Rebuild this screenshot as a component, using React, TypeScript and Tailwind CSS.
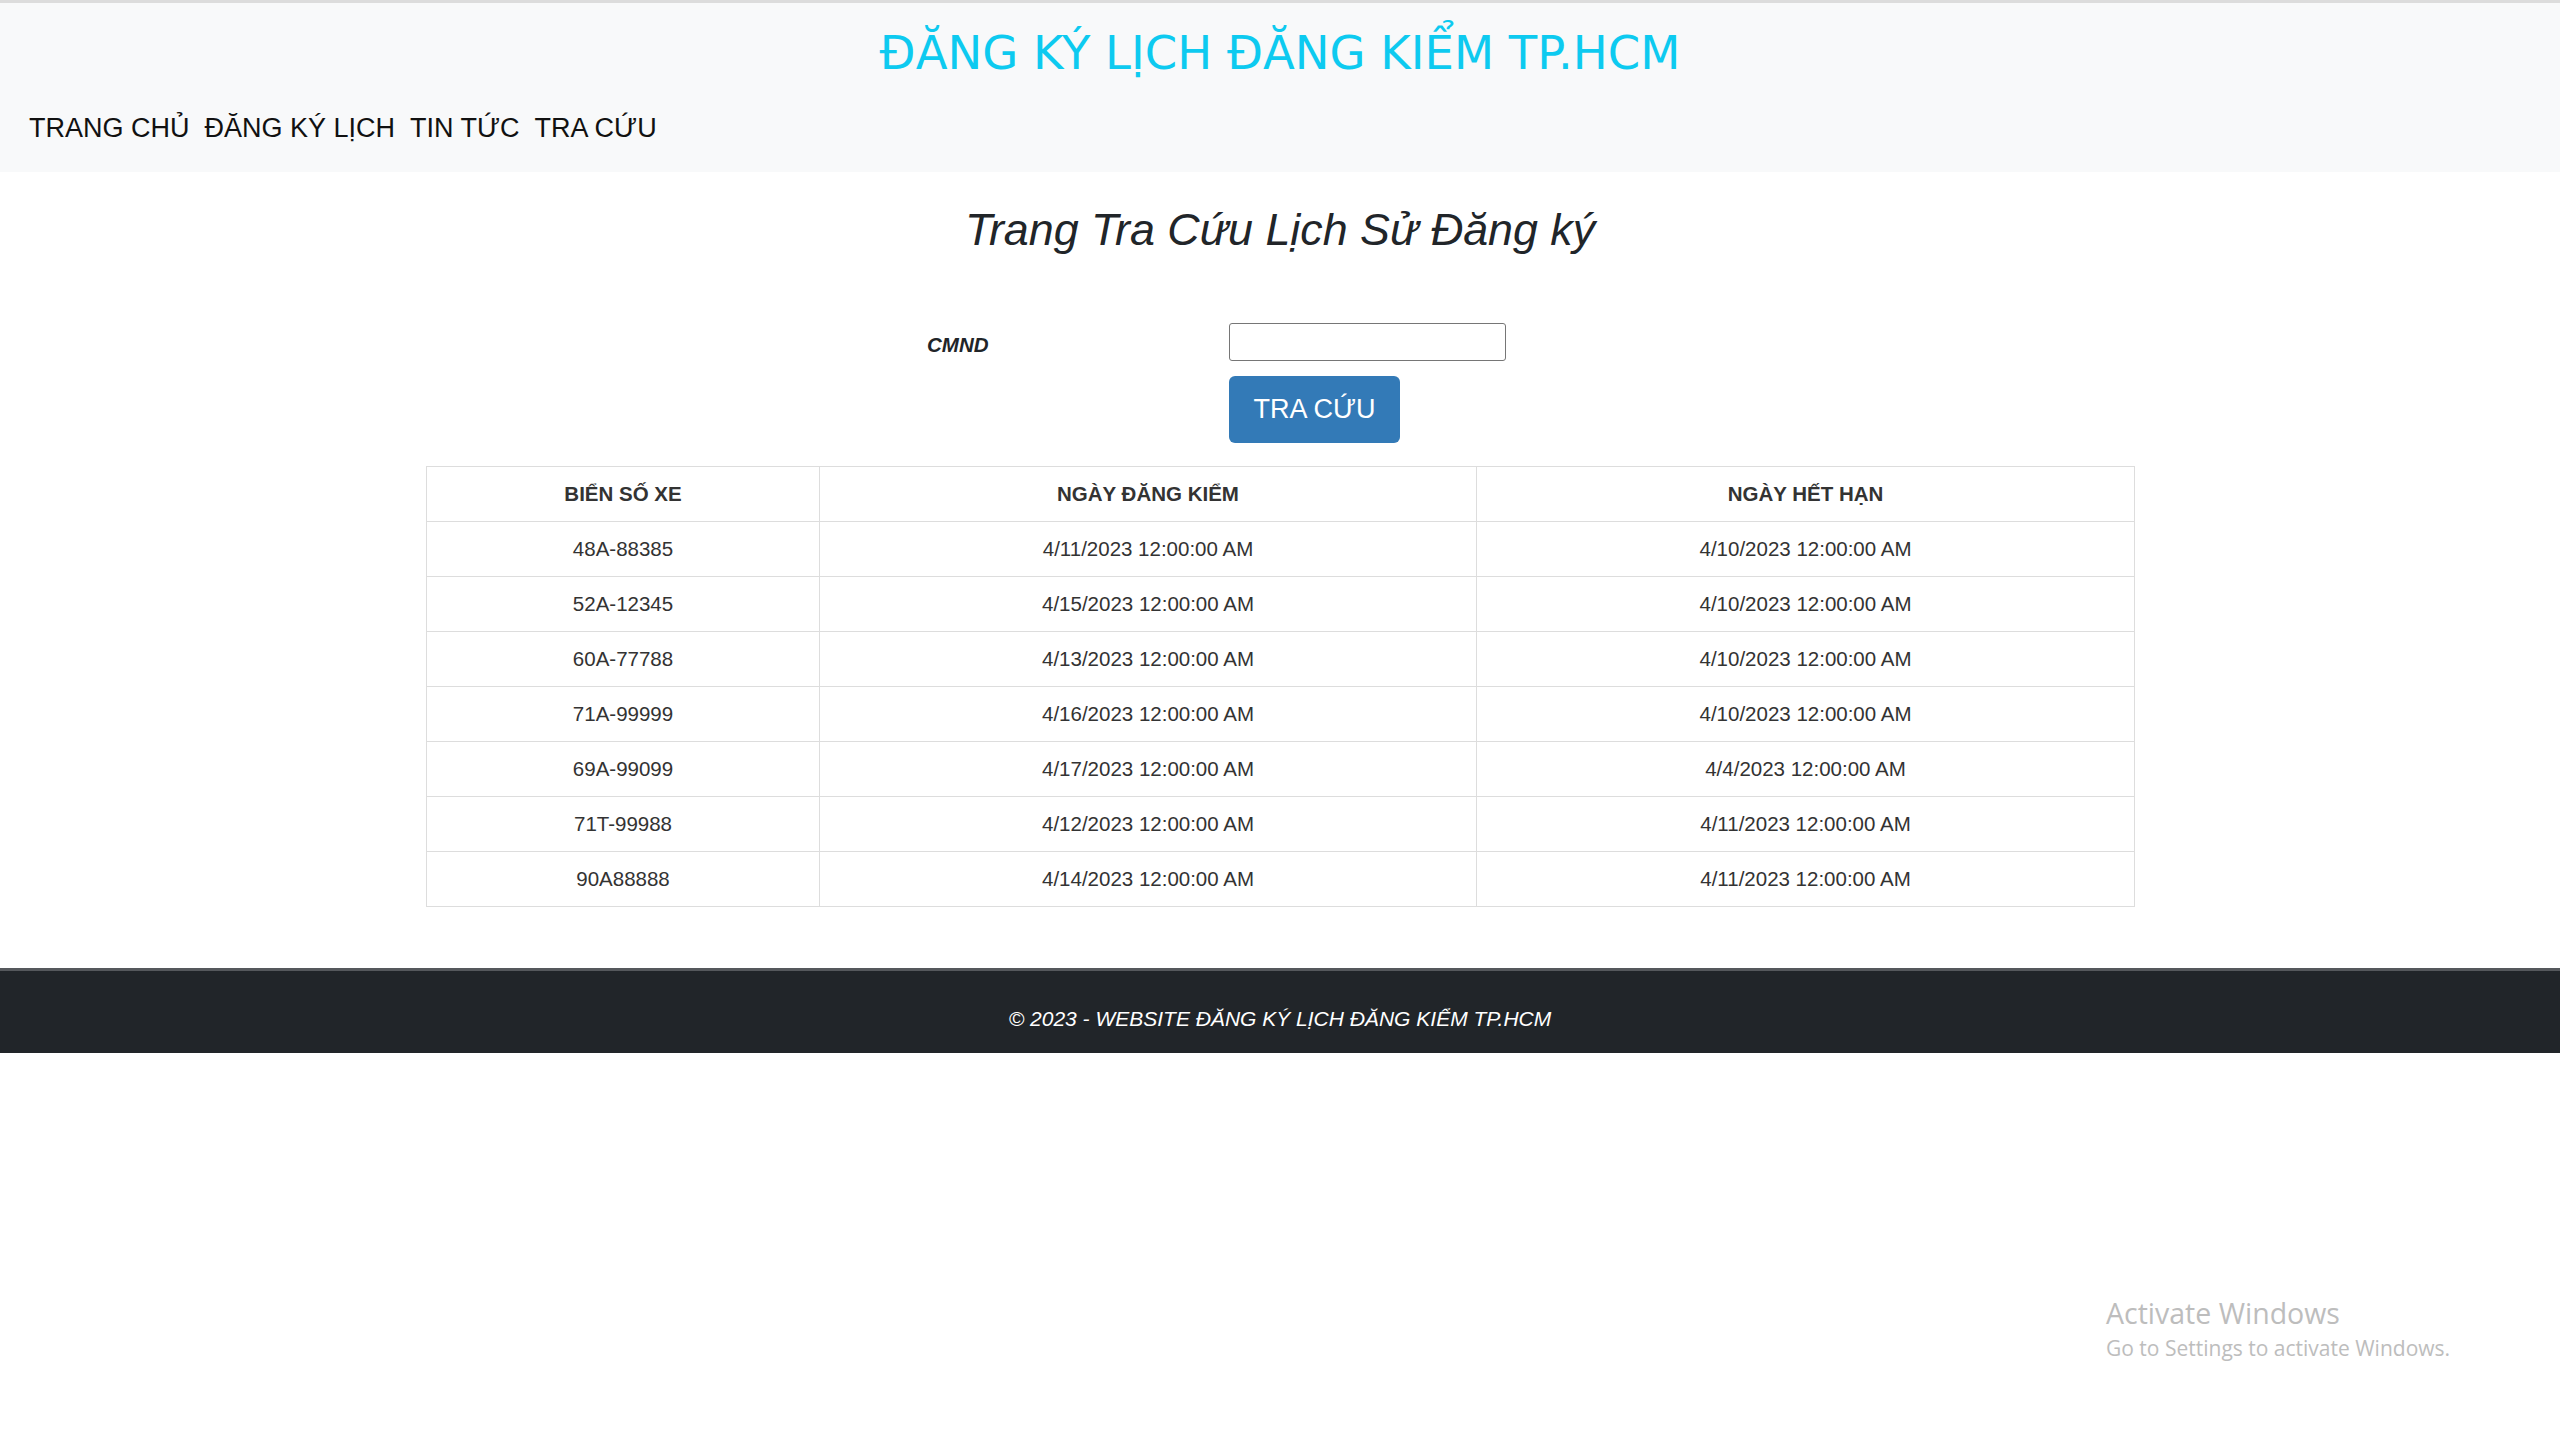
import React from 'react';

type Row = { plate: string; checked: string; expires: string };

const rows: Row[] = [
    { plate: '48A-88385', checked: '4/11/2023 12:00:00 AM', expires: '4/10/2023 12:00:00 AM' },
    { plate: '52A-12345', checked: '4/15/2023 12:00:00 AM', expires: '4/10/2023 12:00:00 AM' },
    { plate: '60A-77788', checked: '4/13/2023 12:00:00 AM', expires: '4/10/2023 12:00:00 AM' },
    { plate: '71A-99999', checked: '4/16/2023 12:00:00 AM', expires: '4/10/2023 12:00:00 AM' },
    { plate: '69A-99099', checked: '4/17/2023 12:00:00 AM', expires: '4/4/2023 12:00:00 AM' },
    { plate: '71T-99988', checked: '4/12/2023 12:00:00 AM', expires: '4/11/2023 12:00:00 AM' },
    { plate: '90A88888', checked: '4/14/2023 12:00:00 AM', expires: '4/11/2023 12:00:00 AM' },
];

const navItems = ['TRANG CHỦ', 'ĐĂNG KÝ LỊCH', 'TIN TỨC', 'TRA CỨU'];

export default function App() {
    return (
        <div className="relative min-h-[1436px] bg-white font-['Liberation_Sans',Arial,sans-serif] text-[#212529]">
            {/* header */}
            <header className="border-t-[3px] border-[#dcdcdc] bg-[#f8f9fa] pb-[19px]">
                <div className="flex h-[100px] items-center justify-center">
                    <h1 className="font-['DejaVu_Sans',sans-serif] text-[46.5px] leading-none text-[#0dcaf0]">
                        ĐĂNG KÝ LỊCH ĐĂNG KIỂM TP.HCM
                    </h1>
                </div>
                <nav className="flex h-[50px] items-center gap-[15px] pl-[29px]">
                    {navItems.map((item) => (
                        <a key={item} href="#" className="text-[27px] leading-none text-[#111]">
                            {item}
                        </a>
                    ))}
                </nav>
            </header>

            <main>
                <div className="flex h-[115px] items-center justify-center">
                    <h2 className="text-[44.8px] italic leading-none">Trang Tra Cứu Lịch Sử Đăng ký</h2>
                </div>

                <div className="mx-auto w-[1708px]">
                    <form className="mt-[36px] pl-[501px]">
                        <div className="flex items-center">
                            <label className="w-[302px] pt-[6px] text-[20.5px] font-bold italic leading-none">CMND</label>
                            <input
                                type="text"
                                className="h-[38px] w-[277px] rounded-[3px] border border-[#767676] bg-white px-2 text-[20px]"
                            />
                        </div>
                        <div className="mt-[15px] pl-[302px]">
                            <button
                                type="button"
                                className="flex h-[67px] w-[171px] items-center justify-center rounded-[6px] bg-[#337ab7] text-[27px] leading-none text-white"
                            >
                                TRA CỨU
                            </button>
                        </div>
                    </form>

                    <table className="mt-[23px] w-[1708px] table-fixed border-collapse text-center text-[20.5px] text-[#333]">
                        <colgroup>
                            <col className="w-[393px]" />
                            <col className="w-[657px]" />
                            <col className="w-[658px]" />
                        </colgroup>
                        <thead>
                            <tr className="h-[55px]">
                                <th className="border border-[#dddddd] font-bold">BIỂN SỐ XE</th>
                                <th className="border border-[#dddddd] font-bold">NGÀY ĐĂNG KIỂM</th>
                                <th className="border border-[#dddddd] font-bold">NGÀY HẾT HẠN</th>
                            </tr>
                        </thead>
                        <tbody>
                            {rows.map((r) => (
                                <tr key={r.plate} className="h-[55px]">
                                    <td className="border border-[#dddddd]">{r.plate}</td>
                                    <td className="border border-[#dddddd]">{r.checked}</td>
                                    <td className="border border-[#dddddd]">{r.expires}</td>
                                </tr>
                            ))}
                        </tbody>
                    </table>
                </div>
            </main>

            <footer className="mt-[61px] border-t-[3px] border-[#55585c] bg-[#212529] pb-[22px] pt-[36px] text-center">
                <p className="text-[21px] italic leading-[24px] text-white">
                    © 2023 - WEBSITE ĐĂNG KÝ LỊCH ĐĂNG KIỂM TP.HCM
                </p>
            </footer>

            {/* windows watermark */}
            <div className="pointer-events-none absolute left-[2106px] top-[1295px] font-['Open_Sans',sans-serif] text-[#bdbdbd]">
                <p className="text-[28.5px] leading-[36px]">Activate Windows</p>
                <p className="text-[21px] leading-[34px]">Go to Settings to activate Windows.</p>
            </div>
        </div>
    );
}
